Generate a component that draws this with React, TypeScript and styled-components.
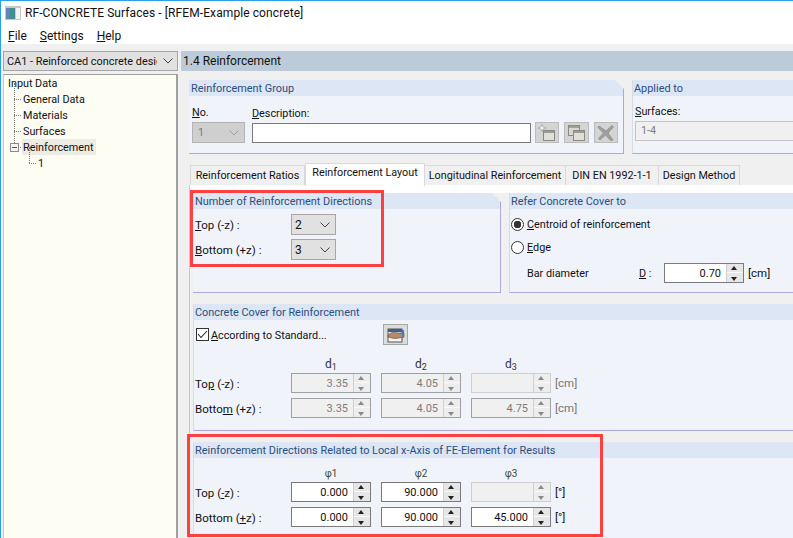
import styled, { createGlobalStyle } from "styled-components";
import type { ReactNode } from "react";

const Global = createGlobalStyle`
  html, body { margin: 0; padding: 0; background: #f0f0f0; }
  body { font-family: Roboto, "Liberation Sans", sans-serif; font-size: 10.8px; color: #111; }
  * { box-sizing: border-box; }
`;

function Chevron({ disabled }: { disabled?: boolean }) {
  return (
    <svg width="10" height="6" viewBox="0 0 10 6">
      <path d="M0.5 0.5 L5 5 L9.5 0.5" fill="none" stroke={disabled ? "#a0a0a0" : "#444"} />
    </svg>
  );
}

function AppIcon() {
  return (
    <svg width="16" height="16" viewBox="0 0 16 16">
      <rect x="0" y="1" width="16" height="14" fill="#c9c9c9" />
      <rect x="1" y="3" width="9" height="11" fill="#3f8f8a" />
      <rect x="1" y="3" width="4" height="11" fill="#5b86b8" />
      <rect x="11" y="3" width="4" height="11" fill="#f2f2f2" />
    </svg>
  );
}

function NewIcon() {
  return (
    <svg width="18" height="17" viewBox="0 0 18 17">
      <rect x="5.5" y="6.5" width="11" height="10" fill="#e0e0d8" stroke="#8a8a80" />
      <rect x="6" y="7" width="10" height="2" fill="#9a9a90" />
      <path d="M4 0 L5 3 L8 4 L5 5 L4 8 L3 5 L0 4 L3 3 Z" fill="#f4f4f0" stroke="#a0a09a" strokeWidth="0.6" />
    </svg>
  );
}

function CopyIcon() {
  return (
    <svg width="18" height="16" viewBox="0 0 18 16">
      <rect x="1.5" y="0.5" width="11" height="10" fill="#d8d8d0" stroke="#8a8a80" />
      <rect x="2" y="1" width="10" height="2" fill="#a0a098" />
      <rect x="6.5" y="5.5" width="11" height="10" fill="#e0e0d8" stroke="#8a8a80" />
      <rect x="7" y="6" width="10" height="2" fill="#9a9a90" />
    </svg>
  );
}

function DeleteIcon() {
  return (
    <svg width="18" height="16" viewBox="0 0 18 16">
      <path d="M2 1 L9 6 L15 0.5 L16.5 2 L11 8 L16 15 L13.5 15.5 L8.5 10 L3 15 L1.5 13.5 L6.5 8 L1 2.5 Z" fill="#a0a0a0" stroke="#8c8c8c" strokeWidth="0.8" />
    </svg>
  );
}

function StandardIcon() {
  return (
    <svg width="18" height="16" viewBox="0 0 18 16">
      <rect x="1" y="2" width="14" height="13" fill="#f4f4f4" stroke="#555" />
      <rect x="1" y="2" width="14" height="3" fill="#3c5f94" />
      <path d="M1 8 C4 5 8 5 11 6 L17 6 L17 10 L12 11 C8 12 4 11 1 10 Z" fill="#b98a68" stroke="#5a4030" strokeWidth="0.6" />
      <path d="M15 3 L17 3 L17 9 L15 10 Z" fill="#4a78b8" />
    </svg>
  );
}

function Spin({ value, state = "on" }: { value?: string; state?: "on" | "off" | "empty" }) {
  return (
    <SpinBox $state={state}>
      <SpinValue $state={state}>{value}</SpinValue>
      <SpinArrows $state={state}>
        <Arrow $up $state={state} />
        <Arrow $state={state} />
      </SpinArrows>
    </SpinBox>
  );
}

function Group({ title, notched, children, grow }: { title: string; notched?: boolean; children: ReactNode; grow?: boolean }) {
  return (
    <GroupBox $notched={notched} $grow={grow}>
      <GroupHead $notched={notched}>{title}</GroupHead>
      {children}
    </GroupBox>
  );
}

export default function App() {
  return (
    <Window>
      <Global />
      <TitleBar>
        <AppIcon />
        <TitleText>RF-CONCRETE Surfaces - [RFEM-Example concrete]</TitleText>
      </TitleBar>
      <MenuBar>
        <MenuItem><u>F</u>ile</MenuItem>
        <MenuItem><u>S</u>ettings</MenuItem>
        <MenuItem><u>H</u>elp</MenuItem>
      </MenuBar>
      <Body>
        <Sidebar>
          <CaseSelect>
            <CaseText>CA1 - Reinforced concrete design</CaseText>
            <Chevron />
          </CaseSelect>
          <Tree>
            <TreeRow>Input Data</TreeRow>
            <TreeRow $depth={1} $line>General Data</TreeRow>
            <TreeRow $depth={1} $line>Materials</TreeRow>
            <TreeRow $depth={1} $line>Surfaces</TreeRow>
            <TreeRow $depth={1} $line $selected>
              <Expander />
              Reinforcement
            </TreeRow>
            <TreeRow $depth={2} $line>1</TreeRow>
          </Tree>
        </Sidebar>
        <Main>
          <PageHead>1.4 Reinforcement</PageHead>
          <TopRow>
            <Group title="Reinforcement Group" notched>
              <GroupFields>
                <Field>
                  <FieldLabel><u>N</u>o.</FieldLabel>
                  <NoSelect>
                    1
                    <Chevron disabled />
                  </NoSelect>
                </Field>
                <Field>
                  <FieldLabel><u>D</u>escription:</FieldLabel>
                  <DescInput />
                </Field>
                <ToolButton><NewIcon /></ToolButton>
                <ToolButton><CopyIcon /></ToolButton>
                <ToolButton><DeleteIcon /></ToolButton>
              </GroupFields>
            </Group>
            <Group title="Applied to" grow>
              <AppliedBody>
                <FieldLabel><u>S</u>urfaces:</FieldLabel>
                <SurfacesInput>1-4</SurfacesInput>
              </AppliedBody>
            </Group>
          </TopRow>
          <Tabs>
            <Tab $width={115}>Reinforcement Ratios</Tab>
            <Tab $width={120} $active>Reinforcement Layout</Tab>
            <Tab $width={141}>Longitudinal Reinforcement</Tab>
            <Tab $width={93}>DIN EN 1992-1-1</Tab>
            <Tab $width={81}>Design Method</Tab>
          </Tabs>
          <TabPage>
            <WhiteStrip />
            <Columns>
              <Group title="Number of Reinforcement Directions" notched>
                <DirectionsBody>
                  <DirRow>
                    <DirLabel><u>T</u>op (-z) :</DirLabel>
                    <DirSelect>2<Chevron /></DirSelect>
                  </DirRow>
                  <DirRow>
                    <DirLabel><u>B</u>ottom (+z) :</DirLabel>
                    <DirSelect>3<Chevron /></DirSelect>
                  </DirRow>
                </DirectionsBody>
              </Group>
              <Group title="Refer Concrete Cover to" grow>
                <ReferBody>
                  <OptionRow>
                    <Radio $checked />
                    <span><u>C</u>entroid of reinforcement</span>
                  </OptionRow>
                  <OptionRow>
                    <Radio />
                    <span><u>E</u>dge</span>
                  </OptionRow>
                  <BarRow>
                    <BarLabel>Bar diameter</BarLabel>
                    <BarSymbol><u>D</u> :</BarSymbol>
                    <Spin value="0.70" />
                    <Unit>[cm]</Unit>
                  </BarRow>
                </ReferBody>
              </Group>
            </Columns>
            <Group title="Concrete Cover for Reinforcement">
              <CoverBody>
                <CheckRow>
                  <CheckBox>
                    <svg width="11" height="9" viewBox="0 0 11 9">
                      <path d="M1 4 L4 7.5 L10 1" fill="none" stroke="#222" strokeWidth="1.1" />
                    </svg>
                  </CheckBox>
                  <CheckLabel><u>A</u>ccording to Standard...</CheckLabel>
                  <StandardButton><StandardIcon /></StandardButton>
                </CheckRow>
                <ValueGrid>
                  <span />
                  <ColHead>d<Sub>1</Sub></ColHead>
                  <ColHead>d<Sub>2</Sub></ColHead>
                  <ColHead>d<Sub>3</Sub></ColHead>
                  <span />
                  <RowLabel>To<u>p</u> (-z) :</RowLabel>
                  <Spin value="3.35" state="off" />
                  <Spin value="4.05" state="off" />
                  <Spin state="empty" />
                  <GridUnit $muted>[cm]</GridUnit>
                  <RowLabel>Botto<u>m</u> (+z) :</RowLabel>
                  <Spin value="3.35" state="off" />
                  <Spin value="4.05" state="off" />
                  <Spin value="4.75" state="off" />
                  <GridUnit $muted>[cm]</GridUnit>
                </ValueGrid>
              </CoverBody>
            </Group>
            <Group title="Reinforcement Directions Related to Local x-Axis of FE-Element for Results">
              <ResultBody>
                <ValueGrid>
                  <span />
                  <PhiHead>φ1</PhiHead>
                  <PhiHead>φ2</PhiHead>
                  <PhiHead>φ3</PhiHead>
                  <span />
                  <RowLabel>Top (<u>-</u>z) :</RowLabel>
                  <Spin value="0.000" />
                  <Spin value="90.000" />
                  <Spin state="empty" />
                  <GridUnit>[°]</GridUnit>
                  <RowLabel>Bottom (<u>+</u>z) :</RowLabel>
                  <Spin value="0.000" />
                  <Spin value="90.000" />
                  <Spin value="45.000" />
                  <GridUnit>[°]</GridUnit>
                </ValueGrid>
              </ResultBody>
            </Group>
          </TabPage>
        </Main>
      </Body>
      <Callout $left={190} $top={190} $width={194} $height={77} />
      <Callout $left={187} $top={434} $width={416} $height={103} />
    </Window>
  );
}

const Window = styled.div`
  position: relative;
  width: 793px;
  height: 538px;
  overflow: hidden;
  display: flex;
  flex-direction: column;
  background: #f0f0f0;
  border-top: 1px solid #2aa0ea;
  border-left: 1px solid #2aa0ea;
`;

const TitleBar = styled.div`
  height: 23px;
  flex: none;
  display: flex;
  align-items: center;
  gap: 4px;
  padding-left: 4px;
  background: #fff;
`;

const TitleText = styled.span`
  font-size: 12px;
  letter-spacing: 0.09px;
  color: #111;
`;

const MenuBar = styled.div`
  height: 20px;
  flex: none;
  display: flex;
  align-items: center;
  gap: 13px;
  padding: 3px 0 0 7px;
  background: #fff;
  font-size: 12px;
`;

const MenuItem = styled.span`
  color: #111;
`;

const Body = styled.div`
  flex: 1;
  min-height: 0;
  display: flex;
  padding: 7px 0 0 2px;
`;

const Sidebar = styled.div`
  width: 175px;
  flex: none;
  display: flex;
  flex-direction: column;
  margin-bottom: -1px;
`;

const CaseSelect = styled.div`
  height: 20px;
  flex: none;
  display: flex;
  align-items: center;
  justify-content: space-between;
  padding: 0 4px 0 3px;
  background: #e1e1e1;
  border: 1px solid #a6a6a6;
  font-size: 10.9px;
`;

const CaseText = styled.span`
  white-space: nowrap;
  overflow: hidden;
  width: 150px;
  line-height: 20px;
  height: 18px;
`;

const Tree = styled.div`
  flex: 1;
  margin-top: 3px;
  padding: 0 0 0 3px;
  background: #fdfdf4;
  border-top: 1px solid #a0a0a0;
  border-right: 2px solid #a0a0a0;
  border-left: 1px solid #c8c8c8;
`;

const TreeRow = styled.div<{ $depth?: number; $line?: boolean; $selected?: boolean }>`
  position: relative;
  width: fit-content;
  height: 16px;
  line-height: 18px;
  padding: 0 2px 0 1px;
  margin-left: ${(p) => (p.$depth ?? 0) * 15}px;
  background: ${(p) => (p.$selected ? "#ecece4" : "transparent")};

  &::before {
    content: "";
    display: ${(p) => (p.$line ? "block" : "none")};
    position: absolute;
    left: -8px;
    top: 8px;
    width: 7px;
    border-top: 1px dotted #777;
  }

  &::after {
    content: "";
    display: ${(p) => (p.$line ? "block" : "none")};
    position: absolute;
    left: -8px;
    top: -8px;
    height: 16px;
    border-left: 1px dotted #777;
  }
`;

const Expander = styled.span`
  position: absolute;
  z-index: 1;
  left: -12px;
  top: 4px;
  width: 9px;
  height: 9px;
  background: linear-gradient(#555, #555) center / 5px 1px no-repeat, #f4f4f4;
  border: 1px solid #8a8a8a;
`;

const Main = styled.div`
  flex: 1;
  min-width: 0;
  margin-left: 3px;
  display: flex;
  flex-direction: column;
`;

const PageHead = styled.div`
  height: 20px;
  flex: none;
  line-height: 20px;
  padding-left: 2px;
  background: #bccbd9;
  font-size: 12px;
`;

const TopRow = styled.div`
  display: flex;
  flex: none;
  gap: 8px;
  margin: 9px 0 0 8px;
  height: 74px;
`;

const GroupBox = styled.section<{ $notched?: boolean; $grow?: boolean }>`
  flex: ${(p) => (p.$grow ? "1" : "none")};
  min-width: 0;
  display: flex;
  flex-direction: column;
  background: #f0f4fa;
  border-bottom: 1px solid #a9a9e6;
  border-right: ${(p) => (p.$notched ? "1px solid #a9a9e6" : "none")};
  border-left: ${(p) => (p.$notched ? "none" : "1px solid #d4dcea")};
  clip-path: ${(p) =>
    p.$notched ? "polygon(0 0, calc(100% - 9px) 0, 100% 9px, 100% 100%, 0 100%)" : "none"};
`;

const GroupHead = styled.div<{ $notched?: boolean }>`
  height: 16px;
  flex: none;
  line-height: 18px;
  padding-left: ${(p) => (p.$notched ? "2px" : "1px")};
  background: #dce6f4;
  color: #2a4f80;
  font-size: 10.9px;
  white-space: nowrap;
`;

const GroupFields = styled.div`
  display: flex;
  align-items: flex-end;
  width: 434px;
  height: 57px;
  padding: 0 0 10px 3px;
`;

const Field = styled.div`
  display: flex;
  flex-direction: column;
  margin-right: 7px;
`;

const FieldLabel = styled.span`
  line-height: 17px;
  height: 18px;
`;

const NoSelect = styled.div`
  width: 53px;
  height: 21px;
  display: flex;
  align-items: center;
  justify-content: space-between;
  padding: 0 5px;
  background: #cfcfcf;
  border: 1px solid #b4b4b4;
  color: #7c7c7c;
`;

const DescInput = styled.div`
  width: 279px;
  height: 20px;
  background: #fff;
  border: 1px solid #7a7a7a;
`;

const ToolButton = styled.button`
  width: 25px;
  height: 21px;
  margin-right: 5px;
  margin-left: -3px;
  padding: 0;
  display: grid;
  place-items: center;
  background: #d4d4d4;
  border: 1px solid #bcbcbc;

  & + & {
    margin-left: 0;
  }
`;

const AppliedBody = styled.div`
  display: flex;
  flex-direction: column;
  padding: 7px 0 0 2px;
  height: 57px;
`;

const SurfacesInput = styled.div`
  height: 20px;
  line-height: 18px;
  padding-left: 5px;
  background: #f0f0f0;
  border: 1px solid #c4c4c4;
  border-right: none;
  color: #7c7c7c;
`;

const Tabs = styled.div`
  flex: none;
  display: flex;
  align-items: flex-end;
  height: 22px;
  margin: 9px 0 0 9px;
`;

const Tab = styled.div<{ $active?: boolean; $width: number }>`
  width: ${(p) => p.$width}px;
  height: ${(p) => (p.$active ? "23px" : "20px")};
  line-height: ${(p) => (p.$active ? "18px" : "19px")};
  text-align: center;
  background: ${(p) => (p.$active ? "#fff" : "#f0f0f0")};
  border: 1px solid #d9d9d9;
  border-bottom: none;
  border-left: ${(p) => (p.$active ? "1px solid #d9d9d9" : "none")};
  margin-bottom: ${(p) => (p.$active ? "-1px" : "0")};
  position: relative;
  white-space: nowrap;

  &:first-child {
    border-left: 1px solid #d9d9d9;
  }
`;

const TabPage = styled.div`
  flex: 1;
  min-height: 0;
  display: flex;
  flex-direction: column;
  gap: 11px;
  margin-left: 8px;
  padding-left: 3px;
  background: #f0f0f0;
  border-left: 1px solid #c8c8c8;
`;

const WhiteStrip = styled.div`
  height: 8px;
  flex: none;
  margin: 0 0 -11px -3px;
  background: #fff;
`;

const Columns = styled.div`
  flex: none;
  display: flex;
  gap: 8px;
  height: 100px;
`;

const DirectionsBody = styled.div`
  width: 307px;
  padding: 5px 0 0 2px;
  display: flex;
  flex-direction: column;
  gap: 4px;
`;

const DirRow = styled.div`
  display: flex;
  align-items: center;
  height: 21px;
`;

const DirLabel = styled.span`
  width: 96px;
  font-size: 11.5px;
`;

const DirSelect = styled.div`
  width: 45px;
  height: 21px;
  display: flex;
  align-items: center;
  justify-content: space-between;
  padding: 0 5px 0 3px;
  background: #e1e1e1;
  border: 1px solid #a6a6a6;
  font-size: 12px;
`;

const ReferBody = styled.div`
  display: flex;
  flex-direction: column;
  padding: 4px 0 0 1px;
`;

const OptionRow = styled.div`
  display: flex;
  align-items: center;
  gap: 3px;
  height: 23px;
`;

const Radio = styled.span<{ $checked?: boolean }>`
  width: 13px;
  height: 13px;
  flex: none;
  border-radius: 50%;
  border: 1px solid #333;
  background: ${(p) =>
    p.$checked ? "radial-gradient(circle, #333 0 3.5px, #fff 4px)" : "#fff"};
`;

const BarRow = styled.div`
  display: flex;
  align-items: center;
  height: 20px;
  margin-top: 4px;
  padding-left: 16px;
`;

const BarLabel = styled.span`
  width: 112px;
`;

const BarSymbol = styled.span`
  width: 25px;
`;

const Unit = styled.span<{ $muted?: boolean }>`
  margin-left: 4px;
  font-size: 11.5px;
  color: ${(p) => (p.$muted ? "#777" : "#111")};
  line-height: 20px;
  white-space: nowrap;
`;

const GridUnit = styled(Unit)`
  margin-left: -6px;
`;

const SpinBox = styled.div<{ $state: string }>`
  width: 80px;
  height: 20px;
  flex: none;
  display: flex;
  background: ${(p) => (p.$state === "on" ? "#fff" : "#f0f0f0")};
  border: 1px solid
    ${(p) => (p.$state === "on" ? "#7a7a7a" : p.$state === "off" ? "#a0a0a0" : "#cfcfcf")};
`;

const SpinValue = styled.span<{ $state: string }>`
  flex: 1;
  text-align: right;
  padding-right: 5px;
  line-height: 20px;
  height: 18px;
  font-size: 11px;
  color: ${(p) => (p.$state === "on" ? "#111" : "#7c7c7c")};
`;

const SpinArrows = styled.span<{ $state: string }>`
  width: 17px;
  flex: none;
  display: flex;
  flex-direction: column;
  background: ${(p) => (p.$state === "on" ? "#e6e6e6" : "#ededed")};
  border-left: 1px solid #d0d0d0;
  gap: 1px;
`;

const Arrow = styled.span<{ $up?: boolean; $state: string }>`
  flex: 1;
  position: relative;
  border-bottom: ${(p) => (p.$up ? "1px solid #fafafa" : "none")};

  &::after {
    content: "";
    position: absolute;
    left: 4px;
    top: ${(p) => (p.$up ? "2px" : "3px")};
    border-left: 3.5px solid transparent;
    border-right: 3.5px solid transparent;
    border-bottom: ${(p) => (p.$up ? `4px solid ${p.$state === "on" ? "#222" : "#8a8a8a"}` : "none")};
    border-top: ${(p) => (p.$up ? "none" : `4px solid ${p.$state === "on" ? "#222" : "#8a8a8a"}`)};
  }
`;

const CoverBody = styled.div`
  height: 110px;
  padding: 0 0 0 1px;
  display: flex;
  flex-direction: column;
`;

const CheckRow = styled.div`
  display: flex;
  align-items: center;
  height: 21px;
  margin: 4px 0 9px;
  padding-left: 1px;
`;

const CheckBox = styled.span`
  width: 13px;
  height: 13px;
  flex: none;
  display: grid;
  place-items: center;
  background: #fff;
  border: 1px solid #333;
`;

const CheckLabel = styled.span`
  width: 172px;
  margin-left: 2px;
  padding-top: 2px;
`;

const StandardButton = styled.button`
  width: 25px;
  height: 21px;
  padding: 0;
  display: grid;
  place-items: center;
  background: #dcdcdc;
  border: 1px solid #a6a6a6;
`;

const ValueGrid = styled.div`
  display: grid;
  grid-template-columns: 86px 80px 80px 80px 1fr;
  grid-template-rows: 14px 20px 20px;
  column-gap: 10px;
  row-gap: 5px;
`;

const ColHead = styled.span`
  text-align: center;
  font-size: 12px;
  line-height: 20px;
  color: #333;
`;

const Sub = styled.sub`
  font-size: 9px;
  vertical-align: -2px;
  line-height: 0;
`;

const PhiHead = styled.span`
  text-align: center;
  font-size: 10px;
  line-height: 21px;
  color: #3a4a3a;
`;

const RowLabel = styled.span`
  line-height: 22px;
  font-size: 11.5px;
  white-space: nowrap;
`;

const ResultBody = styled.div`
  padding: 5px 0 0 1px;
  height: 85px;
`;

const Callout = styled.div<{ $left: number; $top: number; $width: number; $height: number }>`
  position: absolute;
  left: ${(p) => p.$left - 1}px;
  top: ${(p) => p.$top - 1}px;
  width: ${(p) => p.$width}px;
  height: ${(p) => p.$height}px;
  border: 3px solid #ff4040;
  pointer-events: none;
`;
